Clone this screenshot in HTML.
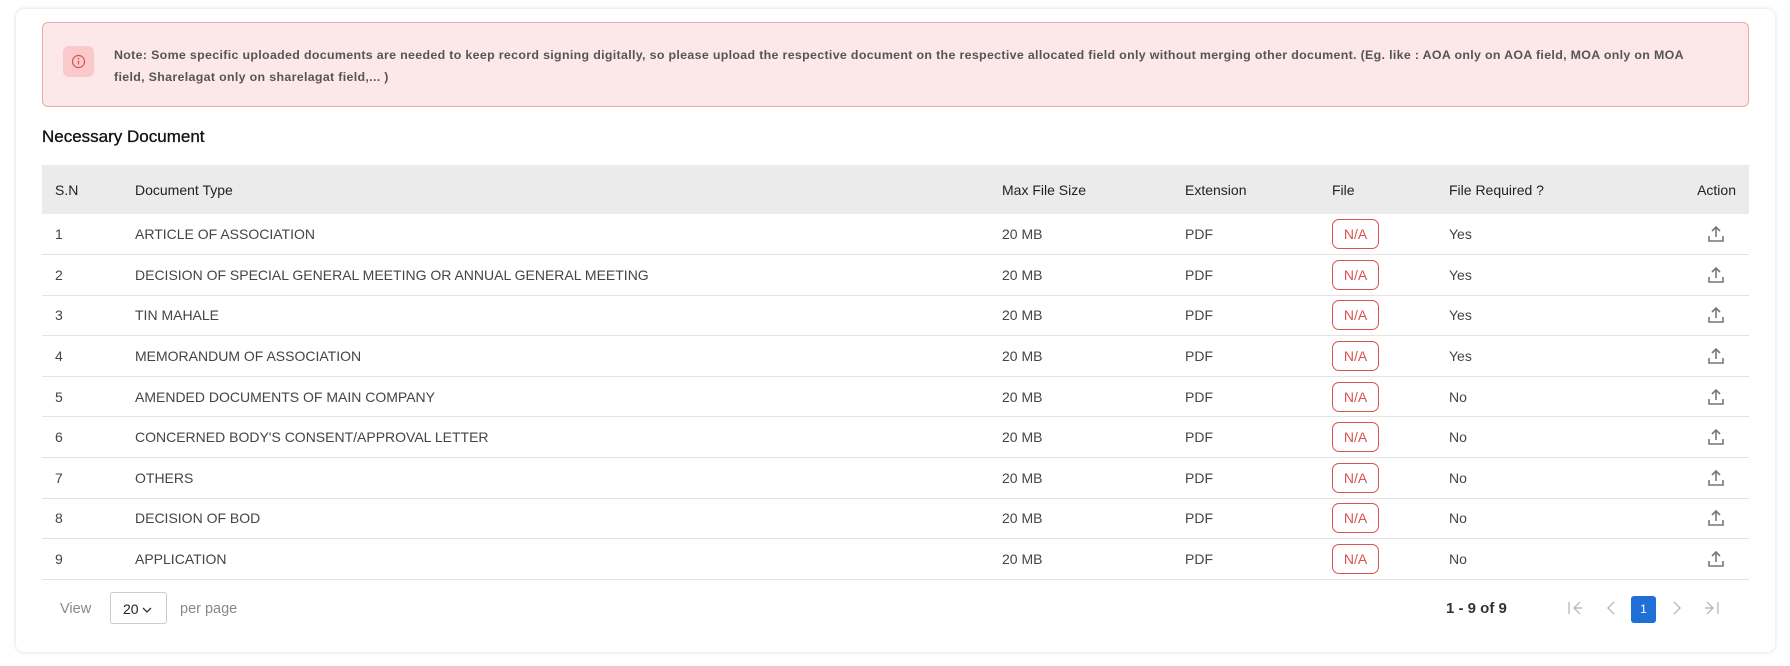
<!DOCTYPE html>
<html><head><meta charset="utf-8"><style>
*{box-sizing:border-box;margin:0;padding:0}
body{width:1790px;height:666px;background:#fff;font-family:"Liberation Sans",sans-serif;color:#333;position:relative;overflow:hidden}
.card{position:absolute;left:16px;top:9px;width:1759px;height:643px;border-radius:8px;box-shadow:0 0 4px rgba(0,0,0,.15);background:#fff}
.alert{position:absolute;left:42px;top:22px;width:1707px;height:85px;background:#fde8e9;border:1px solid #eba9ab;border-radius:6px}
.ic{position:absolute;left:20px;top:23px;width:31px;height:31px;background:#f9c9cb;border-radius:6px}
.alert p{position:absolute;left:71px;top:21px;right:30px;font-size:12.4px;letter-spacing:.33px;font-weight:bold;color:#555;line-height:22px}
h3{position:absolute;left:42px;top:127px;font-size:17px;color:#111;font-weight:normal;-webkit-text-stroke:.3px #111}
table{position:absolute;left:42px;top:165px;width:1707px;border-collapse:collapse;font-size:14px}
th{background:#ebebeb;height:49px;font-weight:normal;text-align:left;color:#222}
td{height:40.6px;border-bottom:1px solid #e3e3e3;color:#444}
th,td{padding:0}
.c1{padding-left:13px;width:93px}.c2{width:867px}.c3{width:183px}.c4{width:147px}.c5{width:117px}.c6{width:200px}.c7{text-align:right;padding-right:13px}
.na{display:inline-block;border:1px solid #d9534f;color:#d9534f;border-radius:7px;width:47px;height:30px;line-height:28px;text-align:center}
.up{display:inline-block;margin-right:10px;vertical-align:middle}
.ft{position:absolute;top:592px;font-size:14.5px;color:#888}
.sel{position:absolute;left:110px;top:592px;width:57px;height:32px;border:1px solid #ccc;border-radius:3px;font-size:14px;color:#222;padding:8px 0 0 12px}
.pg{position:absolute;top:596px;color:#aaa;font-size:16px}
</style></head><body>
<div class="card"></div>
<div class="alert"><div class="ic"><svg width="31" height="31"><circle cx="15.5" cy="15.5" r="6" fill="none" stroke="#d9534f" stroke-width="1.2"/><line x1="15.5" y1="14.5" x2="15.5" y2="18.5" stroke="#d9534f" stroke-width="1.2"/><circle cx="15.5" cy="12.5" r=".8" fill="#d9534f"/></svg></div>
<p>Note: Some specific uploaded documents are needed to keep record signing digitally, so please upload the respective document on the respective allocated field only without merging other document. (Eg. like : AOA only on AOA field, MOA only on MOA field, Sharelagat only on sharelagat field,... )</p></div>
<h3>Necessary Document</h3>
<table>
<tr><th class="c1">S.N</th><th class="c2">Document Type</th><th class="c3">Max File Size</th><th class="c4">Extension</th><th class="c5">File</th><th class="c6">File Required ?</th><th class="c7">Action</th></tr>
<tr><td class="c1">1</td><td>ARTICLE OF ASSOCIATION</td><td>20 MB</td><td>PDF</td><td><span class="na">N/A</span></td><td>Yes</td><td class="c7"><svg class="up" width="20" height="20" viewBox="0 0 20 20" fill="none" stroke="#777" stroke-width="1.6"><path d="M10 3v10M6 7l4-4 4 4M3 12v5h14v-5"/></svg></td></tr>
<tr><td class="c1">2</td><td>DECISION OF SPECIAL GENERAL MEETING OR ANNUAL GENERAL MEETING</td><td>20 MB</td><td>PDF</td><td><span class="na">N/A</span></td><td>Yes</td><td class="c7"><svg class="up" width="20" height="20" viewBox="0 0 20 20" fill="none" stroke="#777" stroke-width="1.6"><path d="M10 3v10M6 7l4-4 4 4M3 12v5h14v-5"/></svg></td></tr>
<tr><td class="c1">3</td><td>TIN MAHALE</td><td>20 MB</td><td>PDF</td><td><span class="na">N/A</span></td><td>Yes</td><td class="c7"><svg class="up" width="20" height="20" viewBox="0 0 20 20" fill="none" stroke="#777" stroke-width="1.6"><path d="M10 3v10M6 7l4-4 4 4M3 12v5h14v-5"/></svg></td></tr>
<tr><td class="c1">4</td><td>MEMORANDUM OF ASSOCIATION</td><td>20 MB</td><td>PDF</td><td><span class="na">N/A</span></td><td>Yes</td><td class="c7"><svg class="up" width="20" height="20" viewBox="0 0 20 20" fill="none" stroke="#777" stroke-width="1.6"><path d="M10 3v10M6 7l4-4 4 4M3 12v5h14v-5"/></svg></td></tr>
<tr><td class="c1">5</td><td>AMENDED DOCUMENTS OF MAIN COMPANY</td><td>20 MB</td><td>PDF</td><td><span class="na">N/A</span></td><td>No</td><td class="c7"><svg class="up" width="20" height="20" viewBox="0 0 20 20" fill="none" stroke="#777" stroke-width="1.6"><path d="M10 3v10M6 7l4-4 4 4M3 12v5h14v-5"/></svg></td></tr>
<tr><td class="c1">6</td><td>CONCERNED BODY'S CONSENT/APPROVAL LETTER</td><td>20 MB</td><td>PDF</td><td><span class="na">N/A</span></td><td>No</td><td class="c7"><svg class="up" width="20" height="20" viewBox="0 0 20 20" fill="none" stroke="#777" stroke-width="1.6"><path d="M10 3v10M6 7l4-4 4 4M3 12v5h14v-5"/></svg></td></tr>
<tr><td class="c1">7</td><td>OTHERS</td><td>20 MB</td><td>PDF</td><td><span class="na">N/A</span></td><td>No</td><td class="c7"><svg class="up" width="20" height="20" viewBox="0 0 20 20" fill="none" stroke="#777" stroke-width="1.6"><path d="M10 3v10M6 7l4-4 4 4M3 12v5h14v-5"/></svg></td></tr>
<tr><td class="c1">8</td><td>DECISION OF BOD</td><td>20 MB</td><td>PDF</td><td><span class="na">N/A</span></td><td>No</td><td class="c7"><svg class="up" width="20" height="20" viewBox="0 0 20 20" fill="none" stroke="#777" stroke-width="1.6"><path d="M10 3v10M6 7l4-4 4 4M3 12v5h14v-5"/></svg></td></tr>
<tr><td class="c1">9</td><td>APPLICATION</td><td>20 MB</td><td>PDF</td><td><span class="na">N/A</span></td><td>No</td><td class="c7"><svg class="up" width="20" height="20" viewBox="0 0 20 20" fill="none" stroke="#777" stroke-width="1.6"><path d="M10 3v10M6 7l4-4 4 4M3 12v5h14v-5"/></svg></td></tr>
</table>
<div class="ft" style="left:60px;top:601px">View</div>
<div class="sel">20<svg width="12" height="8" style="margin-left:2px" viewBox="0 0 12 8" fill="none" stroke="#333" stroke-width="1.3"><path d="M2 2l4 4 4-4"/></svg></div>
<div class="ft" style="left:180px;top:601px">per page</div>
<div class="ft" style="left:1446px;top:600px;color:#333;font-size:15px;font-weight:bold">1 - 9 of 9</div>
<svg class="pg" style="left:1566px" width="18" height="24" viewBox="0 0 18 24" fill="none" stroke="#bbb" stroke-width="1.4"><path d="M3 6v12M14 6l-6 6 6 6M8 12h8"/></svg>
<svg class="pg" style="left:1602px" width="18" height="24" viewBox="0 0 18 24" fill="none" stroke="#bbb" stroke-width="1.4"><path d="M12 6l-6 6 6 6"/></svg>
<div style="position:absolute;left:1631px;top:596px;width:25px;height:27px;background:#1f6fd6;border-radius:3px;color:#fff;font-size:12px;text-align:center;line-height:27px">1</div>
<svg class="pg" style="left:1668px" width="18" height="24" viewBox="0 0 18 24" fill="none" stroke="#bbb" stroke-width="1.4"><path d="M6 6l6 6-6 6"/></svg>
<svg class="pg" style="left:1703px" width="18" height="24" viewBox="0 0 18 24" fill="none" stroke="#bbb" stroke-width="1.4"><path d="M15 6v12M4 6l6 6-6 6M2 12h8"/></svg>
</body></html>
